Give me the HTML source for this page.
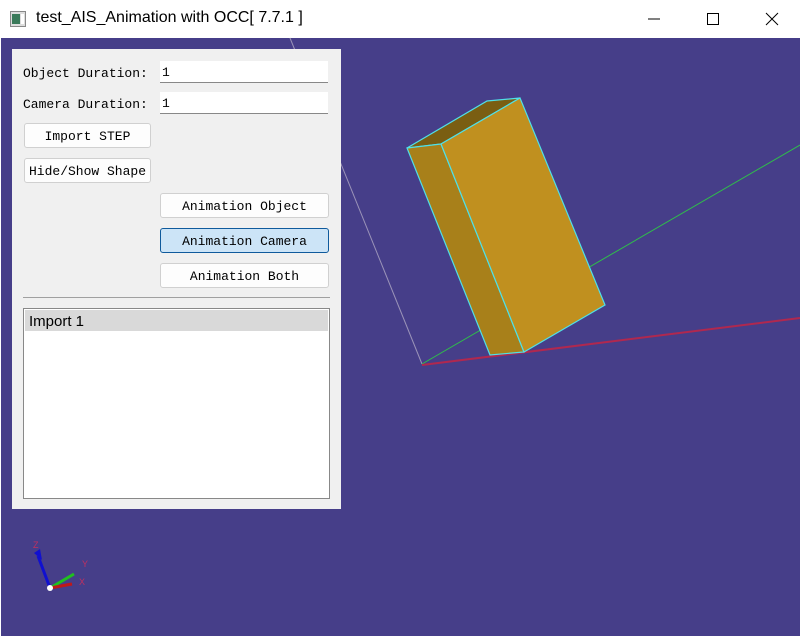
<!DOCTYPE html>
<html><head><meta charset="utf-8"><style>
body{margin:0;width:800px;height:636px;overflow:hidden;background:#fff;position:relative;font-family:"Liberation Mono",monospace;}
.title{position:absolute;left:0;top:0;width:800px;height:38px;background:#fff;}
.title .t{position:absolute;left:36px;top:9px;font:16px "Liberation Sans",sans-serif;color:#000;}
.vp{position:absolute;left:1px;top:38px;width:799px;height:598px;background:#463e89;}
.panel{position:absolute;left:12px;top:49px;width:329px;height:460px;background:#f0f0f0;}
.lbl{position:absolute;font-size:13px;color:#000;}
.inp{position:absolute;left:160px;width:168px;height:22px;background:#fff;border-bottom:1px solid #888;font-size:13px;line-height:23px;box-sizing:border-box;padding-left:2px;}
.btn{position:absolute;height:25px;background:#fdfdfd;border:1px solid #d0d0d0;border-radius:3px;box-sizing:border-box;font-size:13px;text-align:center;line-height:26px;color:#000;}
.btn.sel{background:#cce4f7;border-color:#0f5a9c;}
</style></head><body>
<div class="title">
<svg style="position:absolute;left:10px;top:11px" width="16" height="16"><rect x="0.5" y="0.5" width="15" height="15" fill="#ddd" stroke="#888"/><rect x="2" y="3" width="8" height="10" fill="#3a7a5a"/><rect x="11" y="3" width="3" height="10" fill="#fff"/></svg>
<div class="t">test_AIS_Animation with OCC[ 7.7.1 ]</div>
<svg style="position:absolute;left:640px;top:8px" width="150" height="22"><line x1="8" y1="11" x2="20" y2="11" stroke="#000"/><rect x="67.5" y="5.5" width="11" height="11" fill="none" stroke="#000"/><path d="M126 5L138 17M138 5L126 17" stroke="#000"/></svg>
</div>
<div class="vp"></div>
<svg style="position:absolute;left:0;top:0" width="800" height="636">
<line x1="290" y1="38" x2="422" y2="364" stroke="#9a93b8" stroke-width="1"/>
<line x1="422" y1="364" x2="800" y2="145" stroke="#2fbf4a" stroke-width="1"/>
<line x1="422" y1="365" x2="800" y2="318" stroke="#b0284f" stroke-width="2"/>
<polygon points="407,148 487,101 520,98 441,144" fill="#7a5e12" stroke="#4fe0e8" stroke-width="1.2"/>
<polygon points="407,148 441,144 524,352 490,355" fill="#a8801a" stroke="#4fe0e8" stroke-width="1.2"/>
<polygon points="441,144 520,98 605,305 524,352" fill="#c0901f" stroke="#4fe0e8" stroke-width="1.2"/>
<line x1="50" y1="588" x2="38" y2="556" stroke="#1010d0" stroke-width="3"/>
<polygon points="34,553 40,549 42,560" fill="#1010d0"/>
<line x1="50" y1="588" x2="74" y2="574" stroke="#20c020" stroke-width="3"/>
<line x1="50" y1="588" x2="72" y2="584" stroke="#c01818" stroke-width="3"/>
<circle cx="50" cy="588" r="3" fill="#fff"/>
<text x="33" y="548" font-size="9" fill="#c03060" font-family="Liberation Sans">Z</text>
<text x="82" y="567" font-size="9" fill="#c03060" font-family="Liberation Sans">Y</text>
<text x="79" y="585" font-size="9" fill="#c03060" font-family="Liberation Sans">X</text>
</svg>
<div class="panel"></div>
<div class="lbl" style="left:23px;top:66px">Object Duration:</div>
<div class="inp" style="top:61px">1</div>
<div class="lbl" style="left:23px;top:97px">Camera Duration:</div>
<div class="inp" style="top:92px">1</div>
<div class="btn" style="left:24px;top:123px;width:127px">Import STEP</div>
<div class="btn" style="left:24px;top:158px;width:127px">Hide/Show Shape</div>
<div class="btn" style="left:160px;top:193px;width:169px">Animation Object</div>
<div class="btn sel" style="left:160px;top:228px;width:169px">Animation Camera</div>
<div class="btn" style="left:160px;top:263px;width:169px">Animation Both</div>
<div style="position:absolute;left:23px;top:297px;width:307px;height:1px;background:#a0a0a0"></div>
<div style="position:absolute;left:23px;top:308px;width:307px;height:191px;background:#fff;border:1px solid #888;box-sizing:border-box">
<div style="margin:1px;height:21px;background:#d9d9d9;font:15px 'Liberation Sans',sans-serif;line-height:23px;padding-left:4px">Import 1</div>
</div>
</body></html>
